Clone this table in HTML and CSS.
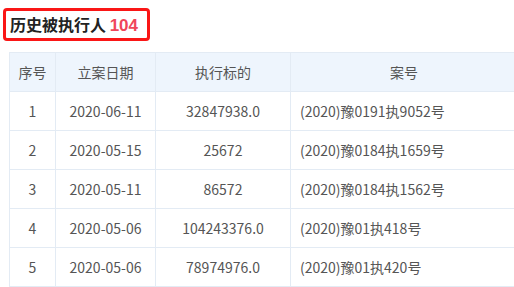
FILE: index.html
```html
<!DOCTYPE html>
<html lang="zh">
<head>
<meta charset="utf-8">
<link rel="stylesheet" href="styles.css">
</head>
<body>
<div class="page">
  <div class="title-row">
    <h2 class="title">历史被执行人 <span class="count">104</span></h2>
  </div>
  <table class="grid">
    <colgroup>
      <col class="c1"><col class="c2"><col class="c3"><col class="c4">
    </colgroup>
    <thead>
      <tr><th>序号</th><th>立案日期</th><th>执行标的</th><th>案号</th></tr>
    </thead>
    <tbody>
      <tr><td>1</td><td>2020-06-11</td><td>32847938.0</td><td class="left">(2020)豫0191执9052号</td></tr>
      <tr><td>2</td><td>2020-05-15</td><td>25672</td><td class="left">(2020)豫0184执1659号</td></tr>
      <tr><td>3</td><td>2020-05-11</td><td>86572</td><td class="left">(2020)豫0184执1562号</td></tr>
      <tr><td>4</td><td>2020-05-06</td><td>104243376.0</td><td class="left">(2020)豫01执418号</td></tr>
      <tr><td>5</td><td>2020-05-06</td><td>78974976.0</td><td class="left">(2020)豫01执420号</td></tr>
    </tbody>
  </table>
</div>
</body>
</html>
```

FILE: styles.css
```css
html, body {
  margin: 0;
  padding: 0;
  overflow: hidden;
  background: #fff;
}
body {
  font-family: "Noto Sans CJK SC", "Noto Sans", sans-serif;
  color: #555;
}
.page {
  padding: 8px 0 0 3px;
  width: 520px;
}
.title-row {
  display: flex;
}
.title {
  margin: 0;
  box-sizing: border-box;
  width: 147px;
  height: 33px;
  border: 3px solid #fa1616;
  border-radius: 4px;
  padding-left: 4px;
  font-size: 16px;
  font-weight: bold;
  color: #222;
  line-height: 27px;
  white-space: nowrap;
}
.count {
  color: #f0465a;
  font-family: "Liberation Sans", "Noto Sans", sans-serif;
  font-size: 17px;
}
.grid {
  margin: 11px 0 0 6px;
  border-collapse: collapse;
  table-layout: fixed;
  width: 508px;
  font-size: 14px;
}
.c1 { width: 46px; }
.c2 { width: 100px; }
.c3 { width: 135px; }
.c4 { width: 227px; }
.grid th, .grid td {
  border: 1px solid #e3ebf4;
  height: 38px;
  padding: 0;
  text-align: center;
  font-weight: normal;
  white-space: nowrap;
  color: #555;
}
.grid th {
  background: #eef5fd;
}
.grid td.left {
  text-align: left;
  padding-left: 9px;
}
```
